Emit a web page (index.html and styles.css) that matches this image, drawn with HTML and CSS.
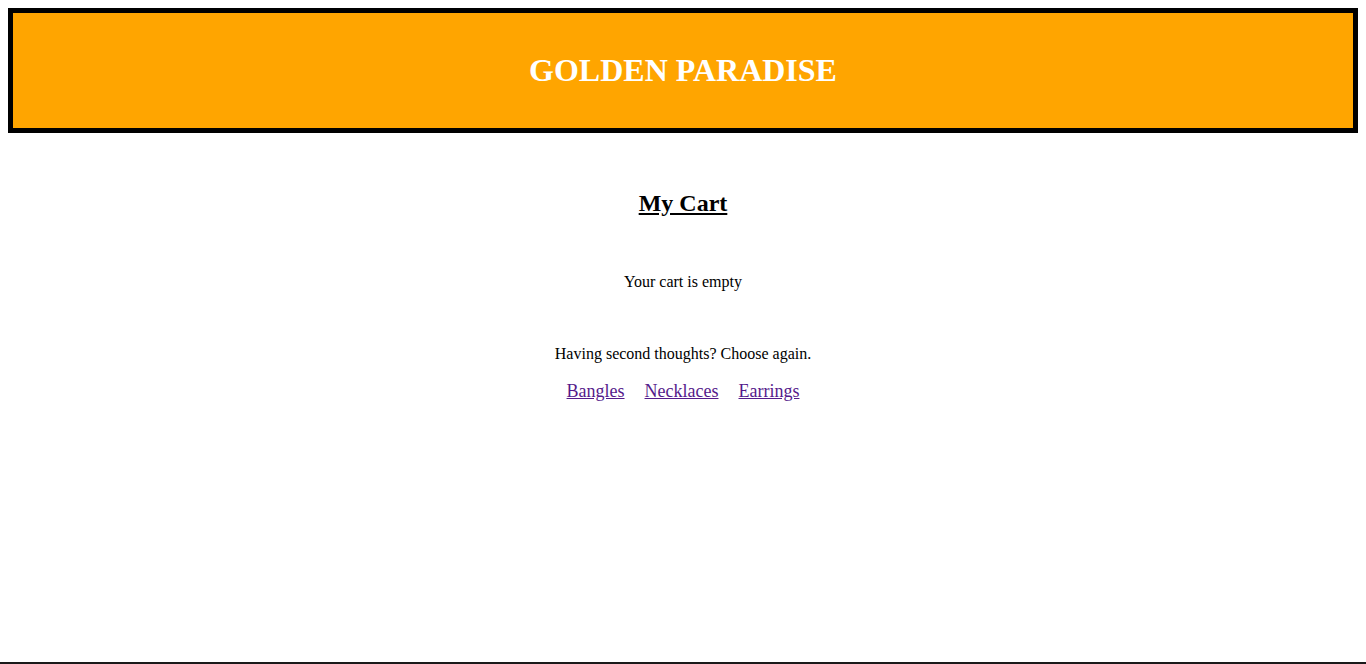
FILE: index.html
```html
<!DOCTYPE html>
<html>
<head>
<meta charset="utf-8">
<title>Golden Paradise - My Cart</title>
<link rel="stylesheet" href="styles.css">
</head>
<body>
<header class="site-header">
  <h1 class="brand">GOLDEN PARADISE</h1>
</header>
<main class="cart">
  <h2 class="cart-title">My Cart</h2>
  <p class="cart-empty">Your cart is empty</p>
  <p class="cart-again">Having second thoughts? Choose again.</p>
  <nav class="cart-links">
    <a href="#bangles">Bangles</a>
    <a href="#necklaces">Necklaces</a>
    <a href="#earrings">Earrings</a>
  </nav>
</main>
<div class="taskbar"></div>
</body>
</html>
```
FILE: styles.css
```css
html, body {
  margin: 0;
  padding: 0;
}
body {
  margin: 8px;
  font-family: "Liberation Serif", "Times New Roman", serif;
  color: #000;
  background: #fff;
}
.site-header {
  background: #ffa500;
  border: 5px solid #000;
  height: 115px;
  display: flex;
  align-items: center;
  justify-content: center;
}
.brand {
  margin: 0;
  color: #fff;
  font-size: 32px;
  font-weight: bold;
  line-height: 37px;
}
.cart {
  display: flex;
  flex-direction: column;
  align-items: center;
}
.cart-title {
  margin: 56px 0 0;
  font-size: 24px;
  font-weight: bold;
  line-height: 28px;
  text-decoration: underline;
}
.cart-empty {
  margin: 56px 0 0;
  font-size: 16px;
  line-height: 18px;
}
.cart-again {
  margin: 54px 0 0;
  font-size: 16px;
  line-height: 18px;
}
.cart-links {
  margin-top: 18px;
  display: flex;
  gap: 20px;
  font-size: 18px;
  line-height: 21px;
}
.cart-links a {
  color: #551a8b;
  text-decoration: underline;
}
.taskbar {
  position: fixed;
  left: 0;
  right: 0;
  bottom: 0;
  height: 2px;
  background: #1a1a1a;
}
```
